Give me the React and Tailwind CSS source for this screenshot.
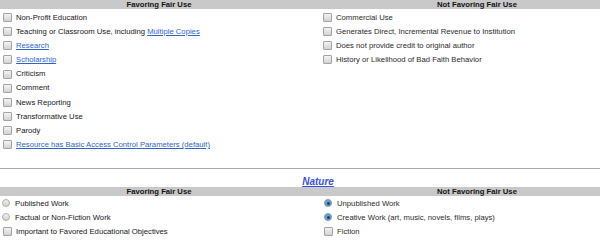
import React from "react";

const font = { fontFamily: '"Liberation Sans", Arial, sans-serif' };

function Checkbox() {
  return (
    <span className="inline-block w-[9px] h-[9px] shrink-0 border border-[#a3a3a3] rounded-[1px] bg-gradient-to-b from-[#f4f4f4] to-[#d2d2d2]" />
  );
}

function Radio({ checked = false }) {
  if (checked) {
    return (
      <span className="inline-flex w-[8px] h-[8px] mr-[1px] shrink-0 rounded-full border border-[#8c9aa8] bg-[#5fa2dc] items-center justify-center">
        <span className="block w-[3px] h-[3px] rounded-full bg-[#1d3d63]" />
      </span>
    );
  }
  return (
    <span className="inline-block w-[8px] h-[8px] mr-[1px] shrink-0 rounded-full border border-[#b0b0b0] bg-gradient-to-b from-[#f2f2f2] to-[#cfcfcf]" />
  );
}

function Link({ children }) {
  return <span className="text-[#2f64cf] underline">{children}</span>;
}

function Row({ input, children, pitch = "h-[14.17px]" }) {
  return (
    <div className={`flex items-center gap-[4px] ${pitch}`}>
      {input}
      <span className="whitespace-nowrap">{children}</span>
    </div>
  );
}

function HeaderBar() {
  return (
    <div className="grid grid-cols-2 h-[9px] bg-[#c9c9c9] font-bold text-[#111] leading-[9px]">
      <div className="text-center">Favoring Fair Use</div>
      <div className="text-center">Not Favoring Fair Use</div>
    </div>
  );
}

const purposeFor = [
  "Non-Profit Education",
  <>
    Teaching or Classroom Use, including <Link>Multiple Copies</Link>
  </>,
  <Link>Research</Link>,
  <Link>Scholarship</Link>,
  "Criticism",
  "Comment",
  "News Reporting",
  "Transformative Use",
  "Parody",
  <Link>Resource has Basic Access Control Parameters (default)</Link>,
];

const purposeAgainst = [
  "Commercial Use",
  "Generates Direct, Incremental Revenue to Institution",
  "Does not provide credit to original author",
  "History or Likelihood of Bad Faith Behavior",
];

export default function App() {
  return (
    <div className="w-[600px] h-[250px] overflow-hidden bg-white">
      <div className="w-[636px] text-[7.7px] text-[#151515]" style={font}>
        <HeaderBar />
        <div className="grid grid-cols-2 pt-[1.4px]">
          <div className="pl-[3px]">
            {purposeFor.map((item, i) => (
              <Row key={i} input={<Checkbox />}>
                {item}
              </Row>
            ))}
          </div>
          <div className="pl-[5px] text-[#2a2a2a]">
            {purposeAgainst.map((item, i) => (
              <Row key={i} input={<Checkbox />}>
                {item}
              </Row>
            ))}
          </div>
        </div>

        <div className="mt-[16.5px] border-t border-[#a9a9a9]" />

        <div className="h-[18px] pt-[7px] flex justify-center">
          <span className="text-[10px] leading-[11px] font-bold italic underline text-[#3a4fe2]">
            Nature
          </span>
        </div>

        <HeaderBar />
        <div className="grid grid-cols-2">
          <div className="pl-[2px]">
            <Row pitch="h-[14px]" input={<Radio />}>Published Work</Row>
            <Row pitch="h-[14px]" input={<Radio />}>Factual or Non-Fiction Work</Row>
            <div className="pl-[1px]">
              <Row pitch="h-[14px]" input={<Checkbox />}>
                Important to Favored Educational Objectives
              </Row>
            </div>
          </div>
          <div className="pl-[6px] text-[#2a2a2a]">
            <Row pitch="h-[14px]" input={<Radio checked />}>Unpublished Work</Row>
            <Row pitch="h-[14px]" input={<Radio checked />}>
              Creative Work (art, music, novels, films, plays)
            </Row>
            <Row pitch="h-[14px]" input={<Checkbox />}>Fiction</Row>
          </div>
        </div>
      </div>
    </div>
  );
}
